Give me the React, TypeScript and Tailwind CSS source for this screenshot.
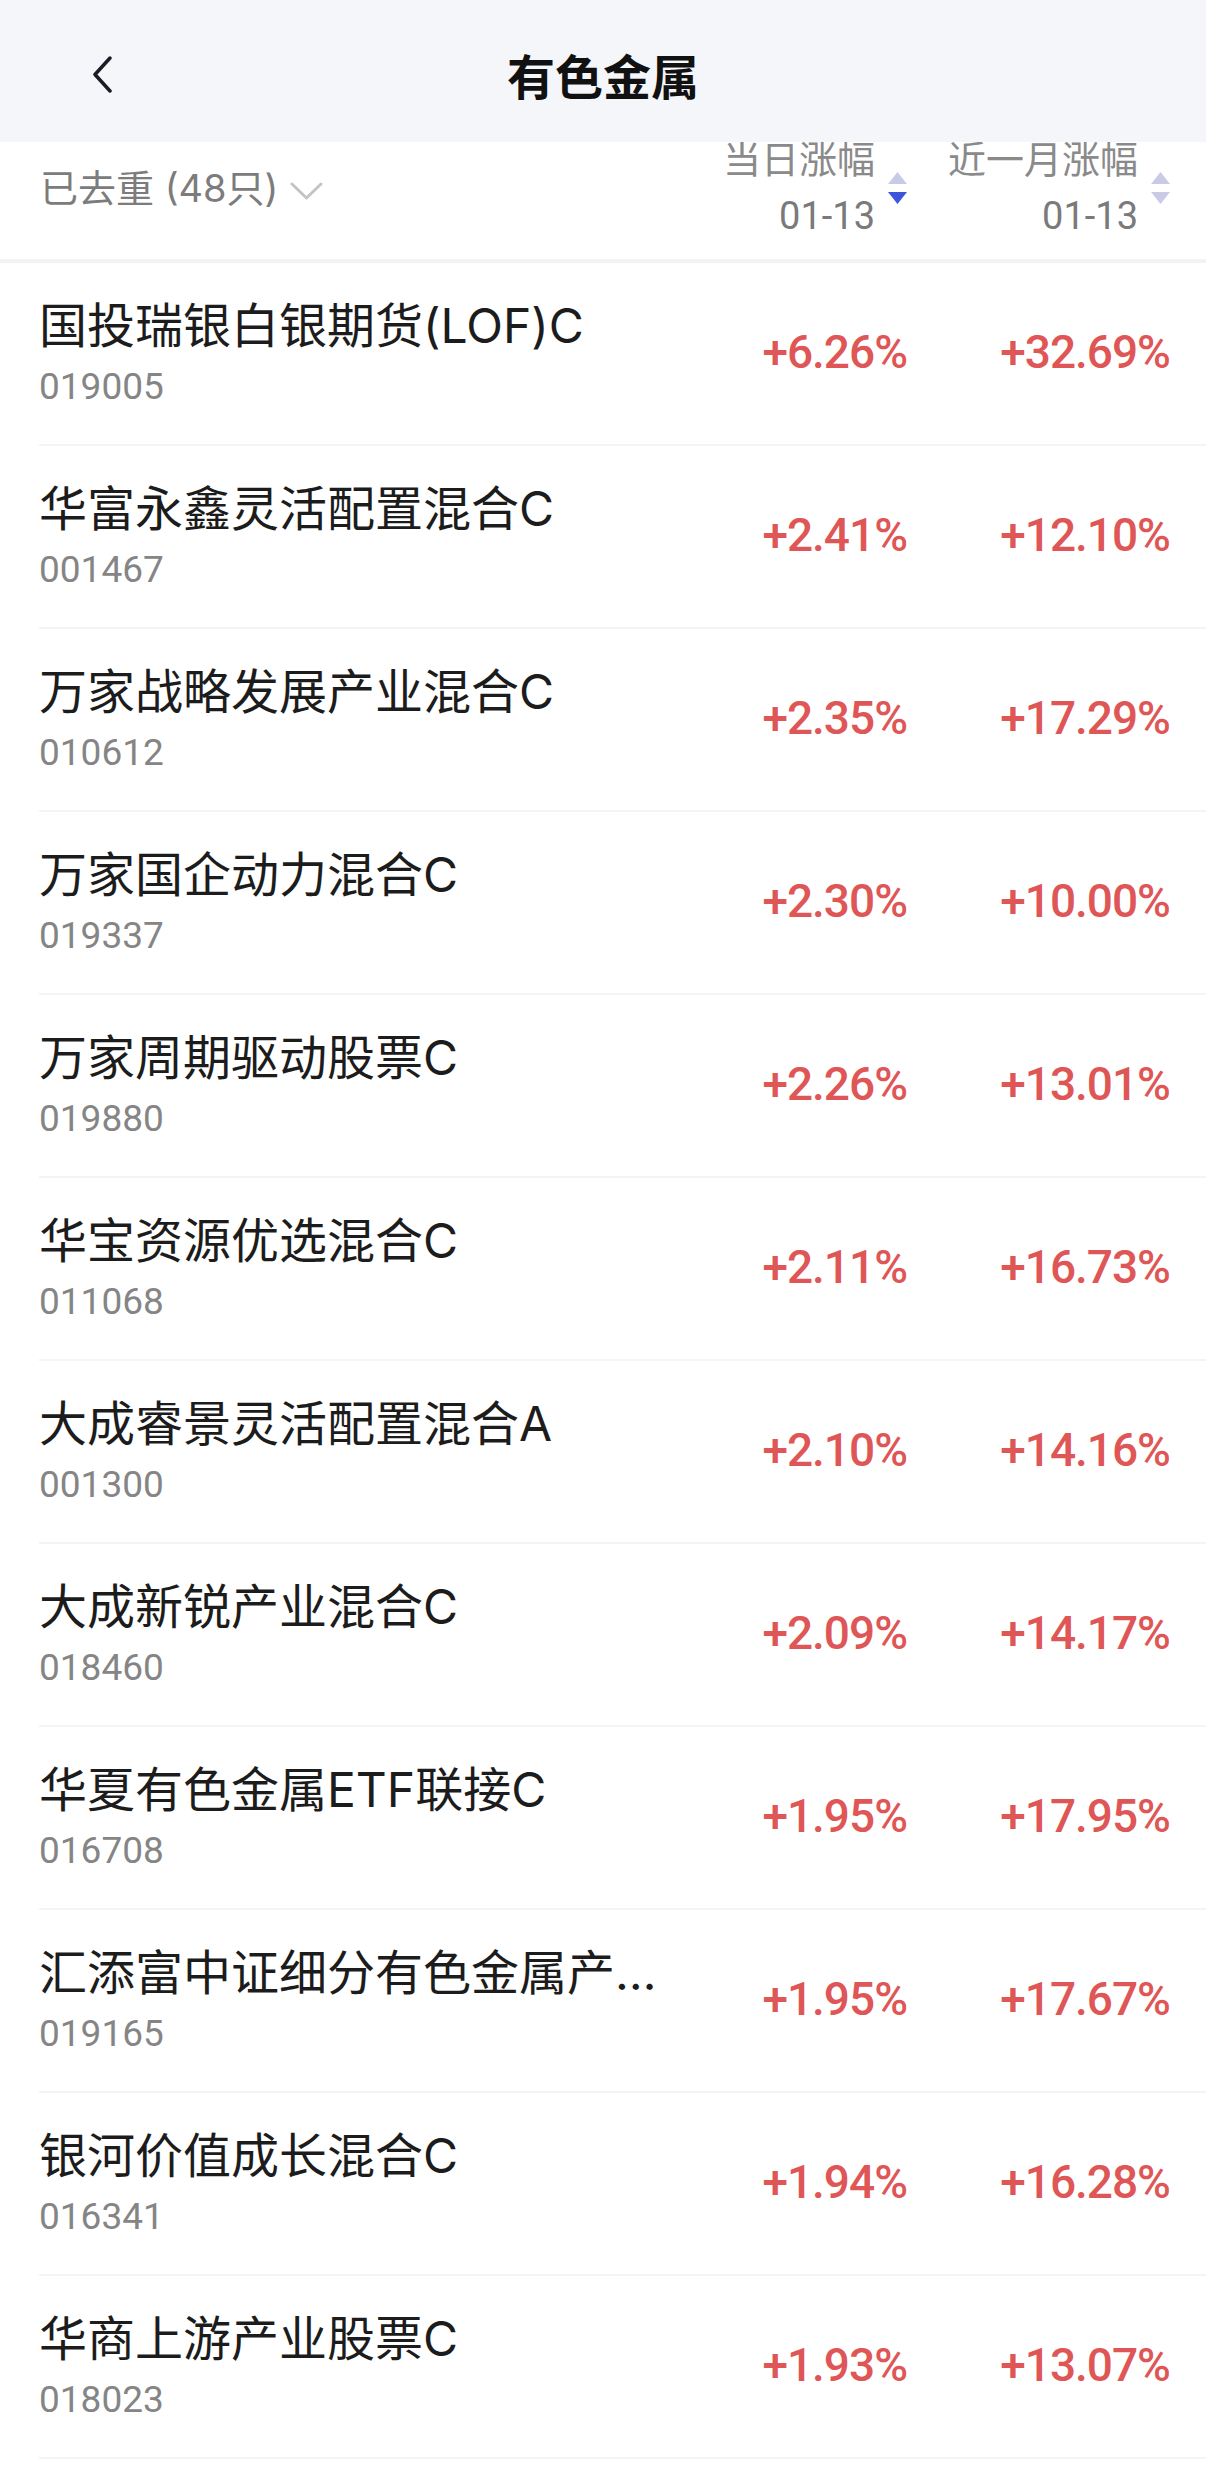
const FUNDS = [
  { name: '国投瑞银白银期货(LOF)C', code: '019005', day: '+6.26%', month: '+32.69%' },
  { name: '华富永鑫灵活配置混合C', code: '001467', day: '+2.41%', month: '+12.10%' },
  { name: '万家战略发展产业混合C', code: '010612', day: '+2.35%', month: '+17.29%' },
  { name: '万家国企动力混合C', code: '019337', day: '+2.30%', month: '+10.00%' },
  { name: '万家周期驱动股票C', code: '019880', day: '+2.26%', month: '+13.01%' },
  { name: '华宝资源优选混合C', code: '011068', day: '+2.11%', month: '+16.73%' },
  { name: '大成睿景灵活配置混合A', code: '001300', day: '+2.10%', month: '+14.16%' },
  { name: '大成新锐产业混合C', code: '018460', day: '+2.09%', month: '+14.17%' },
  { name: '华夏有色金属ETF联接C', code: '016708', day: '+1.95%', month: '+17.95%' },
  { name: '汇添富中证细分有色金属产业主题ETF联接C', code: '019165', day: '+1.95%', month: '+17.67%' },
  { name: '银河价值成长混合C', code: '016341', day: '+1.94%', month: '+16.28%' },
  { name: '华商上游产业股票C', code: '018023', day: '+1.93%', month: '+13.07%' },
];

const FONT = "font-['Inter','Noto_Sans_CJK_SC',sans-serif]";

function SortArrows({ active }: { active: boolean }) {
  return (
    <div className="flex flex-col gap-[8px] ml-[13px] mt-[41px]">
      <svg width="19" height="12" viewBox="0 0 19 12">
        <path d="M9.5 0 L19 12 L0 12 Z" fill="#c9cbe6" />
      </svg>
      <svg width="19" height="12" viewBox="0 0 19 12">
        <path d="M0 0 L19 0 L9.5 12 Z" fill={active ? '#3d55d8' : '#c9cbe6'} />
      </svg>
    </div>
  );
}

function ColHeader({ label, active, width }: { label: string; active: boolean; width: string }) {
  return (
    <div className={`${width} flex justify-end items-start`}>
      <div className="flex flex-col items-end text-[38px] leading-[57px] text-[#8a8a8a]">
        <span>{label}</span>
        <span className="font-['Roboto',sans-serif] text-[#7a7a7a]">01-13</span>
      </div>
      <SortArrows active={active} />
    </div>
  );
}

export default function App() {
  return (
    <div className={`w-[1206px] bg-white ${FONT}`}>
      {/* Top bar */}
      <div className="relative z-10 h-[142px] bg-[#f5f6fa] flex items-center justify-center">
        <svg className="absolute left-[91px] top-[56px]" width="22" height="37" viewBox="0 0 22 37">
          <path d="M19 2 L4 18.5 L19 35" fill="none" stroke="#1c1c28" strokeWidth="3.5" strokeLinecap="round" strokeLinejoin="round" />
        </svg>
        <h1 className="text-[48px] font-bold text-[#111] mt-[14px]">有色金属</h1>
      </div>

      {/* Sort header */}
      <div className="h-[121px] flex items-start border-b-[4px] border-[#f2f3f5] pr-[36px] overflow-hidden">
        <div className="flex-1 flex items-center pl-[40px] mt-[18px] text-[38px] text-[#7c7c7c]">
          <span>已去重 (48只)</span>
          <svg className="ml-[12px] mt-[4px]" width="33" height="18" viewBox="0 0 33 18">
            <path d="M2 2 L16.5 16 L31 2" fill="none" stroke="#c4c4c4" strokeWidth="3" strokeLinecap="round" strokeLinejoin="round" />
          </svg>
        </div>
        <div className="flex -mt-[11px]">
          <ColHeader label="当日涨幅" active width="w-[240px]" />
          <ColHeader label="近一月涨幅" active={false} width="w-[263px]" />
        </div>
      </div>

      {/* Rows */}
      <div>
        {FUNDS.map((f) => (
          <div key={f.code} className="h-[183px] flex items-center ml-[39px] pr-[36px] border-b-[2px] border-[#f4f4f4]">
            <div className="w-[628px] min-w-0 flex flex-col">
              <span className="text-[48px] leading-[60px] text-[#1c1c1c] truncate">{f.name}</span>
              <span className="text-[37px] leading-[48px] mt-[7px] text-[#858585] font-['Roboto',sans-serif]">{f.code}</span>
            </div>
            <div className="flex-1 flex items-center justify-end pb-[2px] font-['Roboto',sans-serif] font-medium text-[46px] tracking-[-1px] text-[#df5656]">
              <span className="w-[240px] text-right">{f.day}</span>
              <span className="w-[263px] text-right">{f.month}</span>
            </div>
          </div>
        ))}
      </div>
    </div>
  );
}
